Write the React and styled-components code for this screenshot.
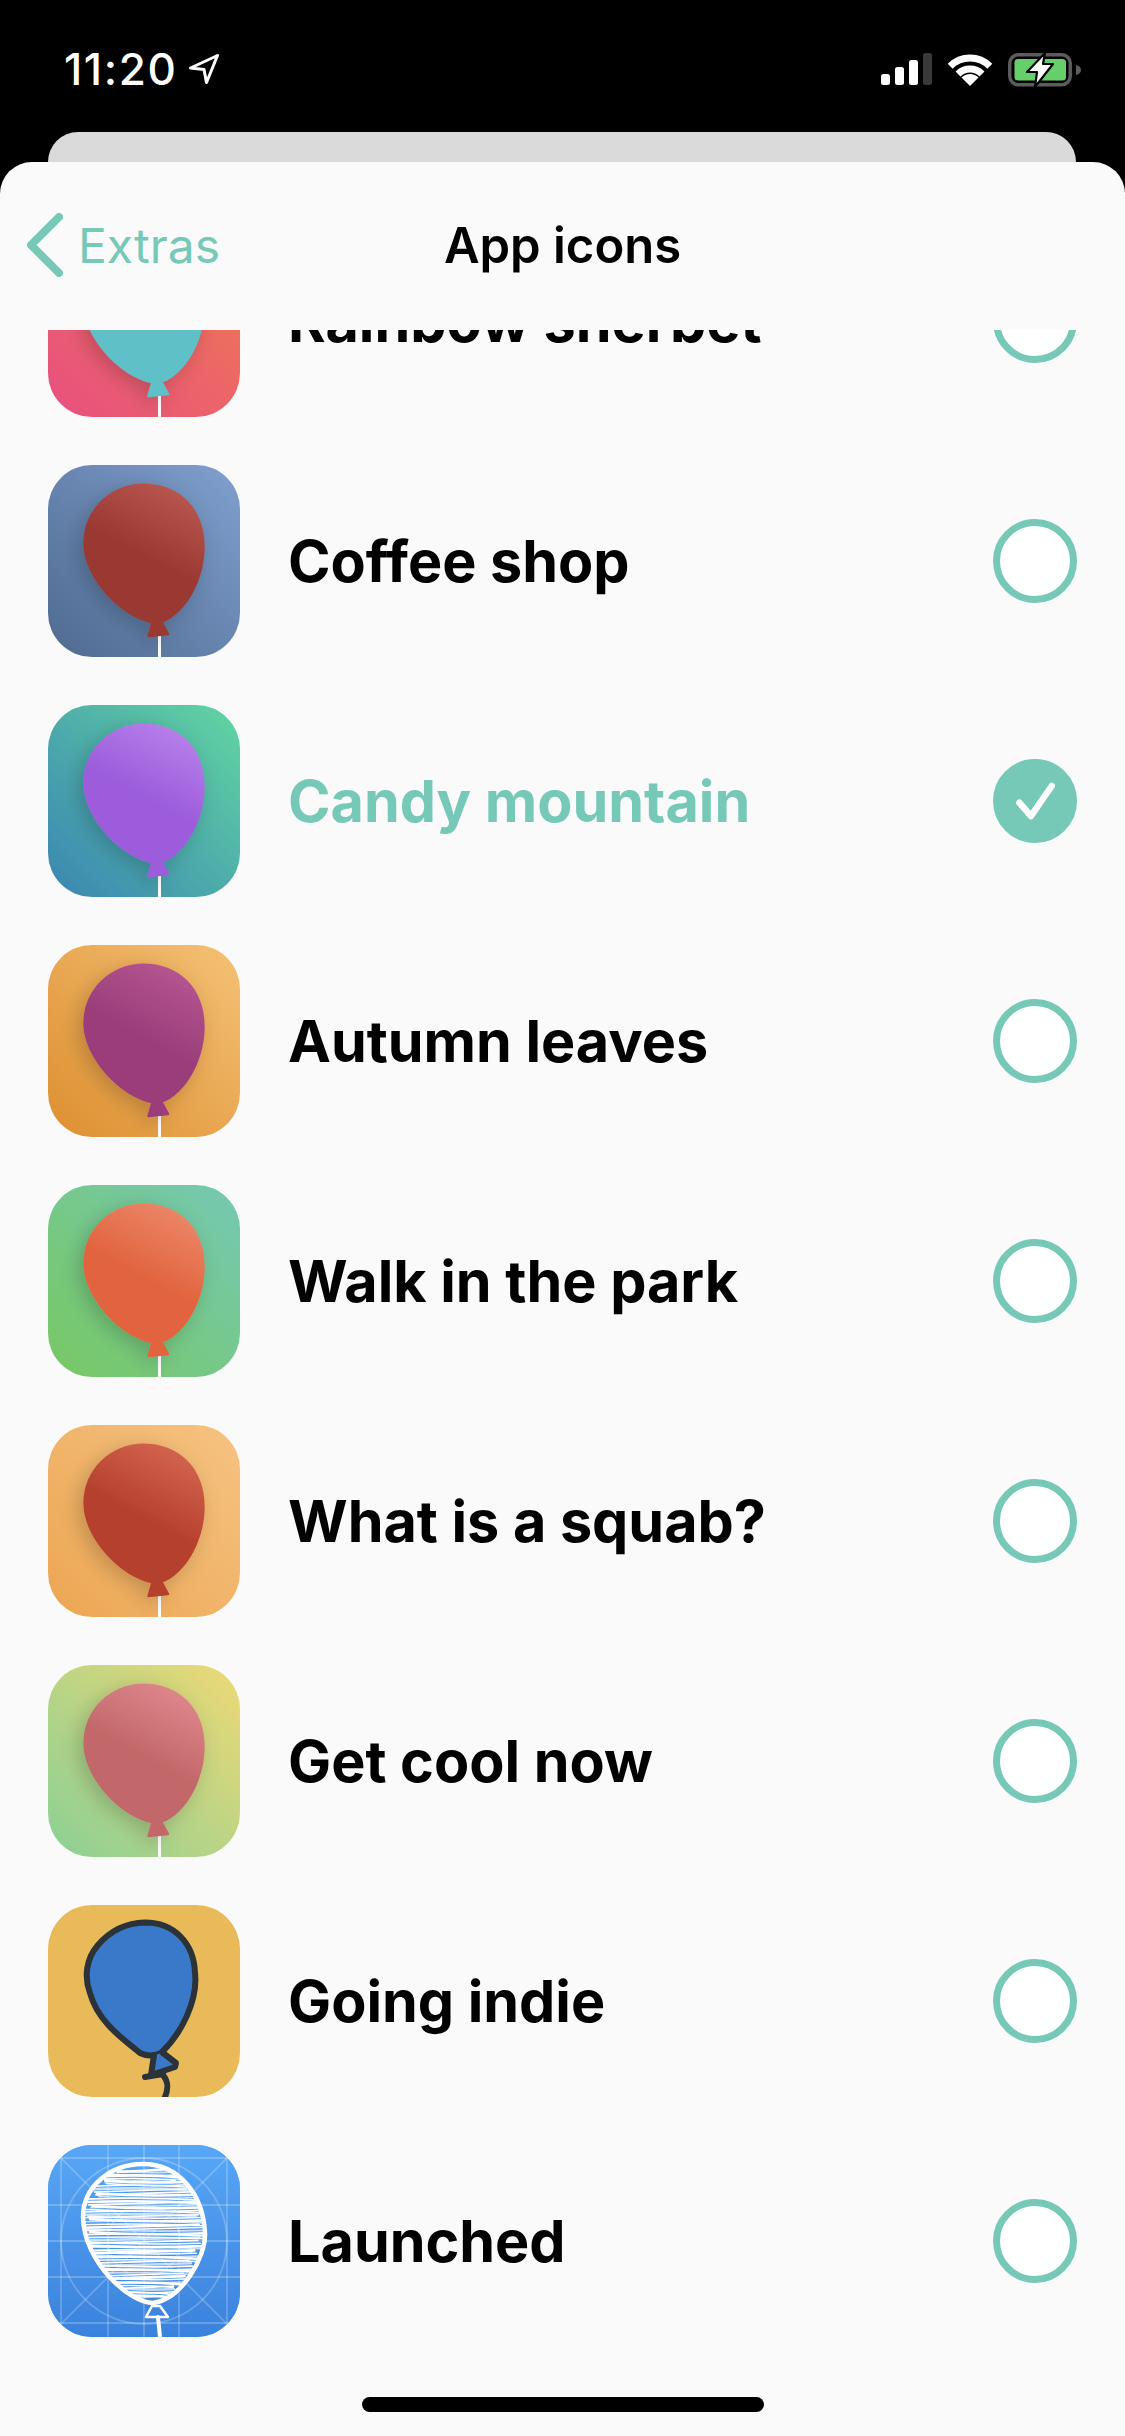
import React from 'react'
import styled, { createGlobalStyle } from 'styled-components'

const GlobalStyle = createGlobalStyle`
  html, body {
    margin: 0;
    padding: 0;
    background: #000;
    font-family: Inter, "Liberation Sans", sans-serif;
  }
`

const mint = '#76c9b7'

const BALLOON = 'M95.5 18.5C130 18.5 156.7 42 156.7 82C156.7 118 134 155 108.7 159C76 156 35.3 115 35.3 78C35.3 45 62 18.5 95.5 18.5Z'
const SKETCH = 'M95 19C130 19 155 48 157 88C158 112 134 154 105 158C82 158 36 118 35 72C35 42 62 19 95 19Z'

const icons = [
  { name: 'Rainbow sherbet', from: '#e84f80', to: '#f07a52', body: '#5fc0c8', shine: '#66c6cf' },
  { name: 'Coffee shop', from: '#4f6a90', to: '#80a0cf', body: '#9a3831', shine: '#bb5a53' },
  { name: 'Candy mountain', from: '#3a85b2', to: '#62d6a2', body: '#9d5cdb', shine: '#b983ec', active: true },
  { name: 'Autumn leaves', from: '#dd8f30', to: '#f5c176', body: '#9a3e7a', shine: '#b85892' },
  { name: 'Walk in the park', from: '#78c862', to: '#75c8b5', body: '#e2643f', shine: '#ec8a6c' },
  { name: 'What is a squab?', from: '#eca653', to: '#f6c382', body: '#b6412e', shine: '#d66853' },
  { name: 'Get cool now', from: '#8ad095', to: '#eed975', body: '#c2686a', shine: '#e18a90' },
  { name: 'Going indie', kind: 'ink' },
  { name: 'Launched', kind: 'sketch' },
]

const Screen = styled.div`
  width: 1125px;
  height: 2436px;
  position: relative;
  overflow: hidden;
  display: flex;
  flex-direction: column;
  background: #000;
`

const StatusBar = styled.div`
  height: 132px;
  flex: none;
  box-sizing: border-box;
  padding: 49px 43px 0 64px;
  display: flex;
  justify-content: space-between;
  align-items: flex-start;
`

const Clock = styled.div`
  display: flex;
  align-items: center;
  gap: 12px;
  color: #fff;
  font-size: 44px;
  line-height: 40px;
  font-weight: 500;
  letter-spacing: 1.6px;
`

const StatusIcons = styled.div`
  display: flex;
  align-items: flex-start;
  gap: 15px;
  padding-top: 4px;
  svg { display: block; }
`

const BackCard = styled.div`
  height: 30px;
  flex: none;
  margin: 0 49px 0 48px;
  background: #dadada;
  border-radius: 30px 30px 0 0;
`

const Sheet = styled.div`
  flex: 1;
  min-height: 0;
  display: flex;
  flex-direction: column;
  background: #fafafa;
  border-radius: 32px 32px 0 0;
`

const NavBar = styled.div`
  height: 168px;
  flex: none;
  box-sizing: border-box;
  padding-bottom: 2px;
  display: grid;
  grid-template-columns: 1fr auto 1fr;
  align-items: center;
`

const BackLink = styled.div`
  display: flex;
  align-items: center;
  gap: 15px;
  padding-left: 27px;
  color: ${mint};
  font-size: 48px;
  font-weight: 400;
  svg { display: block; }
`

const Title = styled.div`
  color: #000;
  font-size: 49px;
  font-weight: 600;
`

const ListViewport = styled.div`
  flex: 1;
  min-height: 0;
  overflow: hidden;
`

/* the list is scrolled a little, so the first row is cut by the nav bar */
const List = styled.div`
  margin-top: -129px;
`

const Row = styled.div`
  height: 240px;
  box-sizing: border-box;
  padding: 0 48px;
  display: flex;
  align-items: center;
`

const Tile = styled.div`
  width: 192px;
  height: 192px;
  flex: none;
  border-radius: 44px;
  overflow: hidden;
  background: ${(p) => p.$bg};
  svg { display: block; }
`

const Name = styled.div`
  flex: 1;
  margin-left: 48px;
  font-size: 57.5px;
  font-weight: 700;
  color: ${(p) => (p.$active ? mint : '#000')};
`

const Radio = styled.div`
  width: 84px;
  height: 84px;
  flex: none;
  box-sizing: border-box;
  border-radius: 50%;
  border: 7px solid ${mint};
  background: ${(p) => (p.$active ? mint : '#fff')};
  display: flex;
  align-items: center;
  justify-content: center;
`

const HomeBar = styled.div`
  position: absolute;
  left: 362px;
  bottom: 24px;
  width: 402px;
  height: 15px;
  border-radius: 8px;
  background: #000;
`

const Knot = ({ fill }) => (
  <path d="M104 159L114 158L120 169L100.5 171Z" fill={fill} stroke={fill} strokeWidth="2.5" strokeLinejoin="round" />
)

const GradientBalloon = ({ id, body, shine }) => (
  <svg width="192" height="192" viewBox="0 0 192 192">
    <defs>
      <linearGradient id={`g${id}`} gradientUnits="userSpaceOnUse" x1="150" y1="25" x2="110" y2="100">
        <stop offset="0" stopColor={shine} />
        <stop offset="1" stopColor={body} />
      </linearGradient>
      <filter id={`s${id}`} x="-40%" y="-40%" width="180%" height="180%">
        <feDropShadow dx="-5" dy="5" stdDeviation="10" floodColor="#000" floodOpacity="0.2" />
      </filter>
    </defs>
    <rect x="110" y="170" width="3" height="22" fill="#fff" />
    <g filter={`url(#s${id})`}>
      <path d={BALLOON} fill={`url(#g${id})`} />
      <Knot fill={body} />
    </g>
  </svg>
)

const InkBalloon = () => (
  <svg width="192" height="192" viewBox="0 0 192 192">
    <g fill="none" stroke="#2b3338" strokeWidth="6" strokeLinecap="round" strokeLinejoin="round">
      <path
        d="M97 17.5C126 17.5 146 38 147 68C150 95 134 128 113 148C106 151 98 151 92 148C78 136 50 118 42 88C36 72 38 54 50 40C62 26 78 18 97 17.5Z"
        fill="#3a78c9"
      />
      <path d="M106 150L103 170L127 162L128 158L115 148" fill="#3a78c9" />
      <path d="M97 172L115 169" />
      <path d="M115 170C120 176 121 182 117 192" />
    </g>
  </svg>
)

// hand drawn hatching: a repeatable jitter, so each line starts and stops a bit differently
const jitter = (i, n) => ((i * 37 + n * 11) % 17) / 16 - 0.5

const scribbles = Array.from({ length: 62 }, (_, i) => {
  const y = 25 + i * 2.1
  const half = Math.max(34, Math.sqrt(Math.max(0, 1 - ((y - 88) / 72) ** 2)) * 66)
  const mid = 96 + (y > 95 ? -4 : 0)
  return {
    key: i,
    x1: mid - half + 5 + jitter(i, 1) * 14,
    x2: mid + half - 5 + jitter(i, 2) * 14,
    y1: y + jitter(i, 3) * 4,
    cy: y + jitter(i, 4) * 6,
    y2: y + jitter(i, 5) * 4,
    width: i % 3 === 0 ? 2.6 : 1.6,
    opacity: i % 4 === 1 ? 0.7 : 1,
  }
})

const SketchBalloon = () => (
  <svg width="192" height="192" viewBox="0 0 192 192">
    <defs>
      <linearGradient id="blueprint" x1="0" y1="0" x2="0" y2="1">
        <stop offset="0" stopColor="#58a7f7" />
        <stop offset="1" stopColor="#3a82dc" />
      </linearGradient>
      <clipPath id="sketchClip">
        <path d={SKETCH} />
      </clipPath>
    </defs>
    <rect width="192" height="192" fill="url(#blueprint)" />
    <g fill="none" stroke="#fff" strokeOpacity="0.22" strokeWidth="1.8">
      <path d="M13 0V192M60 0V192M96 0V192M131 0V192M179 0V192" />
      <path d="M0 13H192M0 60H192M0 96H192M0 132H192M0 178H192" />
      <path d="M0 0L192 192M192 0L0 192" />
      <circle cx="96" cy="96" r="83" />
      <circle cx="96" cy="96" r="36" />
    </g>
    <g clipPath="url(#sketchClip)" stroke="#fff" fill="none" strokeLinecap="round">
      {scribbles.map((s) => (
        <path
          key={s.key}
          d={`M${s.x1} ${s.y1}Q96 ${s.cy} ${s.x2} ${s.y2}`}
          strokeWidth={s.width}
          strokeOpacity={s.opacity}
        />
      ))}
    </g>
    <g fill="none" stroke="#fff" strokeLinejoin="round" strokeLinecap="round">
      <path d={SKETCH} strokeWidth="4.5" />
      <path d="M104 161L112 161L120 172L98 172Z" strokeWidth="2.5" />
      <path d="M110 172L112 192" strokeWidth="4" />
    </g>
  </svg>
)

const AppIcon = ({ icon, id }) => {
  if (icon.kind === 'ink') return <Tile $bg="#e9ba5a"><InkBalloon /></Tile>
  if (icon.kind === 'sketch') return <Tile $bg="#4a94ea"><SketchBalloon /></Tile>
  return (
    <Tile $bg={`linear-gradient(to top right, ${icon.from}, ${icon.to})`}>
      <GradientBalloon id={id} body={icon.body} shine={icon.shine} />
    </Tile>
  )
}

const Check = () => (
  <svg width="40" height="40" viewBox="0 0 40 40" fill="none">
    <path d="M4.3 21.7L16 35L36.7 5" stroke="#fff" strokeWidth="6.5" strokeLinecap="round" strokeLinejoin="round" />
  </svg>
)

const LocationArrow = () => (
  <svg width="30" height="30" viewBox="0 0 30 30" fill="none">
    <path d="M1.5 14L28.5 1.5L17.5 28.5L15 15.5Z" stroke="#fff" strokeWidth="3" strokeLinejoin="round" />
  </svg>
)

const Signal = () => (
  <svg width="51" height="32" viewBox="0 0 51 32">
    <rect x="0" y="21" width="9" height="11" rx="2.5" fill="#fff" />
    <rect x="14" y="14" width="9" height="18" rx="2.5" fill="#fff" />
    <rect x="28" y="7" width="9" height="25" rx="2.5" fill="#fff" />
    <rect x="42" y="0" width="9" height="32" rx="2.5" fill="#3a3a3a" />
  </svg>
)

const Wifi = () => (
  <svg width="46" height="33" viewBox="0 0 46 33" fill="none">
    <path d="M3.2 13.2A28 28 0 0 1 42.8 13.2" stroke="#fff" strokeWidth="7" />
    <path d="M11 21A17 17 0 0 1 35 21" stroke="#fff" strokeWidth="7" />
    <path d="M23 33L14.5 24.5A12 12 0 0 1 31.5 24.5Z" fill="#fff" />
  </svg>
)

const Battery = () => (
  <svg width="74" height="35" viewBox="0 0 74 35" fill="none">
    <rect x="1.75" y="1.75" width="60.5" height="30" rx="8.5" stroke="#5c5c5c" strokeWidth="3.5" />
    <path d="M68 12C71 12.5 73 14.5 73 17C73 19.5 71 21.5 68 22Z" fill="#5c5c5c" />
    <rect x="6.5" y="6" width="51.5" height="21.5" rx="3.5" fill="#65d06a" />
    <path d="M37 0L19 19H29L27 34L45 11H35Z" fill="#fff" stroke="#000" strokeWidth="2.2" strokeLinejoin="round" />
  </svg>
)

const BackChevron = () => (
  <svg width="36" height="64" viewBox="0 0 36 64" fill="none">
    <path d="M32 4L4 32L32 60" stroke={mint} strokeWidth="8" strokeLinecap="round" strokeLinejoin="round" />
  </svg>
)

const App = () => (
  <Screen>
    <GlobalStyle />
    <StatusBar>
      <Clock>
        11:20
        <LocationArrow />
      </Clock>
      <StatusIcons>
        <Signal />
        <Wifi />
        <Battery />
      </StatusIcons>
    </StatusBar>
    <BackCard />
    <Sheet>
      <NavBar>
        <BackLink>
          <BackChevron />
          Extras
        </BackLink>
        <Title>App icons</Title>
        <div />
      </NavBar>
      <ListViewport>
        <List>
          {icons.map((icon, i) => (
            <Row key={icon.name}>
              <AppIcon icon={icon} id={i} />
              <Name $active={icon.active}>{icon.name}</Name>
              <Radio $active={icon.active}>{icon.active && <Check />}</Radio>
            </Row>
          ))}
        </List>
      </ListViewport>
    </Sheet>
    <HomeBar />
  </Screen>
)

export default App
